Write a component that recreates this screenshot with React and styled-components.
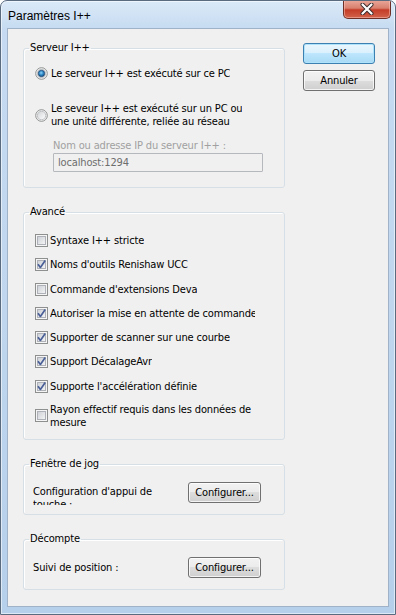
import styled, { createGlobalStyle } from 'styled-components';

const GlobalStyle = createGlobalStyle`
  html, body {
    margin: 0;
    padding: 0;
    background: #ffffff;
  }
  body {
    font-family: "DejaVu Sans", "Liberation Sans", sans-serif;
    font-stretch: condensed;
    font-size: 11px;
    letter-spacing: -0.15px;
    color: #000;
  }
`;

const Window = styled.div`
  width: 396px;
  height: 615px;
  box-sizing: border-box;
  border: 1px solid #5a6b80;
  border-radius: 7px 7px 0 0;
  background: linear-gradient(180deg, #dbe9f8 0px, #c6dbf1 28px, #bed5ee 60%, #b6cfea 100%);
  box-shadow: inset 0 0 0 1px rgba(255, 255, 255, 0.55);
  display: flex;
  flex-direction: column;
  overflow: hidden;
`;

const TitleBar = styled.div`
  height: 27px;
  display: flex;
  align-items: flex-start;
`;

const Title = styled.div`
  font-family: "Liberation Sans", sans-serif;
  font-stretch: normal;
  letter-spacing: 0;
  font-size: 12px;
  padding: 8px 0 0 7px;
  color: #000;
`;

const CloseButton = styled.div`
  margin: -1px 4px 0 auto;
  width: 48px;
  height: 19px;
  box-sizing: border-box;
  border: 1px solid #6e3026;
  border-top: none;
  border-radius: 0 0 5px 5px;
  background: linear-gradient(180deg, #e9a99b 0%, #d9806f 45%, #c43c27 55%, #d2634c 100%);
  box-shadow: inset 0 0 0 1px rgba(255, 200, 190, 0.5);
  display: flex;
  align-items: center;
  justify-content: center;
`;

const Client = styled.div`
  flex: 1;
  margin: 0 6px 7px;
  border: 1px solid #9fb2c8;
  background: #f0f0f0;
  display: flex;
  padding: 12px 13px 0 15px;
  gap: 18px;
`;

const Groups = styled.div`
  width: 262px;
  display: flex;
  flex-direction: column;
  gap: 17px;
`;

const Group = styled.fieldset`
  margin: 0;
  padding: 0 9px;
  box-sizing: border-box;
  height: ${(p) => p.$h}px;
  border: 1px solid #d5dfe5;
  border-radius: 3px;
  box-shadow: inset 1px 1px 0 #fff;
  min-width: 0;
`;

const Legend = styled.legend`
  padding: 0 1px;
  margin-left: -4px;
  line-height: 14px;
  color: #000;
`;

const Options = styled.div`
  display: flex;
  flex-direction: column;
  padding-left: 2px;
  margin-top: ${(p) => p.$top || 0}px;
  gap: ${(p) => p.$gap || 0}px;
`;

const Option = styled.label`
  display: flex;
  align-items: center;
  gap: ${(p) => (p.$radio ? 3 : 2)}px;
  line-height: 13px;
  margin-top: ${(p) => p.$mt || 0}px;
`;

const OptionText = styled.span`
  white-space: nowrap;
  overflow: hidden;
  max-width: ${(p) => p.$max || 240}px;
`;

const FieldLabel = styled.div`
  color: #a0a0a0;
  line-height: 13px;
  margin: 11px 0 1px 20px;
`;

const TextInput = styled.input`
  margin-left: 20px;
  width: 210px;
  height: 19px;
  box-sizing: border-box;
  border: 1px solid #b5b9be;
  border-radius: 1px;
  background: #f0f0f0;
  color: #6d6d6d;
  font: inherit;
  letter-spacing: inherit;
  padding: 0 0 0 4px;
  outline: none;
`;

const ConfigRow = styled.div`
  display: flex;
  align-items: ${(p) => p.$align || 'center'};
  margin-top: 11px;
`;

const ConfigLabel = styled.div`
  width: 155px;
  line-height: 13px;
  height: ${(p) => (p.$clip ? '20px' : 'auto')};
  overflow: hidden;
  padding-top: ${(p) => (p.$clip ? 3 : 0)}px;
`;

const Button = styled.button`
  width: ${(p) => p.$w || 73}px;
  height: 21px;
  box-sizing: border-box;
  padding: 0;
  font: inherit;
  letter-spacing: inherit;
  color: #000;
  border: 1px solid ${(p) => (p.$default ? '#3c7fb1' : '#707070')};
  border-radius: 3px;
  background: ${(p) =>
    p.$default
      ? 'linear-gradient(180deg, #eaf6fd 0%, #d9f0fc 50%, #bee6fd 50%, #a7d9f5 100%)'
      : 'linear-gradient(180deg, #f2f2f2 0%, #ebebeb 50%, #dddddd 50%, #cfcfcf 100%)'};
  box-shadow: inset 0 0 0 1px ${(p) => (p.$default ? '#aee3fb' : 'rgba(255,255,255,0.75)')};
`;

const Actions = styled.div`
  display: flex;
  flex-direction: column;
  gap: 6px;
  margin-top: 2px;
`;

const Checkbox = ({ checked }) => (
  <svg width="13" height="13" viewBox="0 0 13 13">
    <defs>
      <linearGradient id="cbIn" x1="0" y1="0" x2="1" y2="1">
        <stop offset="0" stopColor="#cbcfd5" />
        <stop offset="1" stopColor="#f6f6f6" />
      </linearGradient>
    </defs>
    <rect x="0.5" y="0.5" width="12" height="12" fill="#f5f5f5" stroke="#8e8f8f" />
    <rect x="2.5" y="2.5" width="8" height="8" fill="url(#cbIn)" stroke="#aeb2b8" />
    {checked && (
      <path d="M3 6.2 L5.4 9.4 L10.2 2.6" fill="none" stroke="#4a5f97" strokeWidth="1.7" strokeLinejoin="round" />
    )}
  </svg>
);

const Radio = ({ checked }) => (
  <svg width="13" height="13" viewBox="0 0 13 13">
    <defs>
      <linearGradient id="rdOut" x1="0" y1="0" x2="1" y2="1">
        <stop offset="0" stopColor="#d0d3d6" />
        <stop offset="1" stopColor="#ffffff" />
      </linearGradient>
      <radialGradient id="rdDot" cx="0.45" cy="0.4" r="0.6">
        <stop offset="0" stopColor="#8fd2f7" />
        <stop offset="0.55" stopColor="#2b86c6" />
        <stop offset="1" stopColor="#1a4f80" />
      </radialGradient>
    </defs>
    <circle cx="6.5" cy="6.5" r="5.8" fill="#f4f4f4" stroke="#8e8f8f" strokeWidth="1" />
    <circle cx="6.5" cy="6.5" r="4.2" fill="url(#rdOut)" stroke="#b5b8bc" strokeWidth="0.8" />
    {checked && <circle cx="6.5" cy="6.5" r="3.2" fill="url(#rdDot)" stroke="#1c4670" strokeWidth="0.7" />}
  </svg>
);

const advanced = [
  { text: 'Syntaxe I++ stricte', checked: false },
  { text: "Noms d'outils Renishaw UCC", checked: true },
  { text: "Commande d'extensions Deva", checked: false },
  { text: 'Autoriser la mise en attente de commandes', checked: true, max: 205 },
  { text: 'Supporter de scanner sur une courbe', checked: true },
  { text: 'Support DécalageAvr', checked: true },
  { text: "Supporte l'accélération définie", checked: true },
];

export default function App() {
  return (
    <>
      <GlobalStyle />
      <Window>
        <TitleBar>
          <Title>Paramètres I++</Title>
          <CloseButton>
            <svg width="14" height="12" viewBox="0 0 14 12">
              <path d="M2.5 1.5 L11.5 10.5 M11.5 1.5 L2.5 10.5" stroke="#3a2a2a" strokeWidth="4" strokeLinecap="round" />
              <path d="M2.5 1.5 L11.5 10.5 M11.5 1.5 L2.5 10.5" stroke="#ffffff" strokeWidth="2.2" strokeLinecap="round" />
            </svg>
          </CloseButton>
        </TitleBar>
        <Client>
          <Groups>
            <Group $h={147}>
              <Legend>Serveur I++</Legend>
              <Options $top={12}>
                <Option $radio>
                  <Radio checked />
                  <OptionText>Le serveur I++ est exécuté sur ce PC</OptionText>
                </Option>
                <Option $radio $mt={22}>
                  <Radio />
                  <OptionText>
                    Le seveur I++ est exécuté sur un PC ou
                    <br />
                    une unité différente, reliée au réseau
                  </OptionText>
                </Option>
              </Options>
              <FieldLabel>Nom ou adresse IP du serveur I++ :</FieldLabel>
              <TextInput disabled value="localhost:1294" readOnly />
            </Group>

            <Group $h={235}>
              <Legend>Avancé</Legend>
              <Options $top={15} $gap={11.25}>
                {advanced.map((item) => (
                  <Option key={item.text}>
                    <Checkbox checked={item.checked} />
                    <OptionText $max={item.max}>{item.text}</OptionText>
                  </Option>
                ))}
                <Option $mt={-1}>
                  <Checkbox />
                  <OptionText>
                    Rayon effectif requis dans les données de
                    <br />
                    mesure
                  </OptionText>
                </Option>
              </Options>
            </Group>

            <Group $h={58}>
              <Legend>Fenêtre de jog</Legend>
              <ConfigRow $align="flex-start">
                <ConfigLabel $clip>
                  Configuration d'appui de
                  <br />
                  touche :
                </ConfigLabel>
                <Button>Configurer...</Button>
              </ConfigRow>
            </Group>

            <Group $h={58}>
              <Legend>Décompte</Legend>
              <ConfigRow>
                <ConfigLabel>Suivi de position :</ConfigLabel>
                <Button>Configurer...</Button>
              </ConfigRow>
            </Group>
          </Groups>

          <Actions>
            <Button $w={72} $default>OK</Button>
            <Button $w={72}>Annuler</Button>
          </Actions>
        </Client>
      </Window>
    </>
  );
}
